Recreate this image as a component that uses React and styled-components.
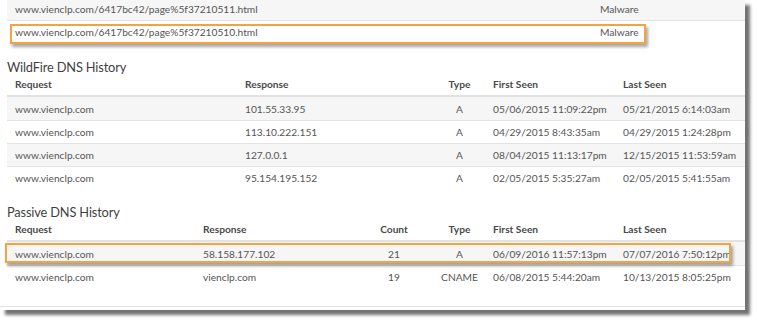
import React from 'react';
import styled, {createGlobalStyle} from 'styled-components';

const GlobalStyle = createGlobalStyle`
    body {
        margin: 0;
        background: #fff;
        font-family: Lato, "Open Sans", sans-serif;
    }
`;

const Page = styled.div`
    width: 757px;
    height: 322px;
    overflow: hidden;
    background: #fff;
`;

const Panel = styled.div`
    position: relative;
    width: 745px;
    height: 310px;
    background: #fff;
    box-shadow: 5px 5px 3px rgba(0, 0, 0, 0.55);
    overflow: hidden;
`;

const Inner = styled.div`
    margin-top: -3px;
    padding-left: 7px;
    height: 310px;
    border-bottom: 1px solid #e4e4e4;
    box-sizing: border-box;
`;

const Heading = styled.h3`
    margin: 0;
    padding: ${p => p.$top}px 0 0 0;
    height: 18px;
    line-height: 18px;
    font-size: 12.8px;
    font-weight: 400;
    color: #3f3f3f;
    letter-spacing: -0.15px;
`;

const Row = styled.div`
    display: grid;
    grid-template-columns: ${p => p.$cols};
    align-items: center;
    height: 23px;
    padding-left: 8px;
    box-sizing: border-box;
    background: ${p => (p.$striped ? '#f6f6f6' : '#fff')};
    border-top: ${p => (p.$first ? 'none' : '1px solid #e3e3e3')};
    font-size: 10.2px;
    color: #555;
    white-space: nowrap;
`;

const HeadRow = styled(Row)`
    height: 21px;
    border-top: none;
    border-bottom: 2px solid #e2e2e2;
    font-weight: 700;
    color: #4a4a4a;
    background: #fff;
    align-items: start;
    padding-top: 2px;
    line-height: 13px;
`;

const Cell = styled.div`
    text-align: ${p => p.$align || 'left'};
`;

const Highlight = styled.div`
    position: absolute;
    left: ${p => p.$x}px;
    top: ${p => p.$y}px;
    width: ${p => p.$w}px;
    height: ${p => p.$h}px;
    border: 2px solid #f6a33f;
    box-sizing: border-box;
    box-shadow: 2px 3px 3px rgba(0, 0, 0, 0.35);
    pointer-events: none;
`;

const urlCols = '585px 1fr';
const wfCols = '230px 181px 67px 130px 1fr';
const pdCols = '188px 159px 64px 67px 130px 1fr';

const urls = [
    ['www.vienclp.com/6417bc42/page%5f37210511.html', 'Malware'],
    ['www.vienclp.com/6417bc42/page%5f37210510.html', 'Malware'],
];

const wildfire = [
    ['www.vienclp.com', '101.55.33.95', 'A', '05/06/2015 11:09:22pm', '05/21/2015 6:14:03am'],
    ['www.vienclp.com', '113.10.222.151', 'A', '04/29/2015 8:43:35am', '04/29/2015 1:24:28pm'],
    ['www.vienclp.com', '127.0.0.1', 'A', '08/04/2015 11:13:17pm', '12/15/2015 11:53:59am'],
    ['www.vienclp.com', '95.154.195.152', 'A', '02/05/2015 5:35:27am', '02/05/2015 5:41:55am'],
];

const passive = [
    ['www.vienclp.com', '58.158.177.102', '21', 'A', '06/09/2016 11:57:13pm', '07/07/2016 7:50:12pm'],
    ['www.vienclp.com', 'vienclp.com', '19', 'CNAME', '06/08/2015 5:44:20am', '10/13/2015 8:05:25pm'],
];

function App() {
    return (
        <Page>
            <GlobalStyle />
            <Panel>
                <Inner>
                    {urls.map((u, i) => (
                        <Row key={u[1] + i} $cols={urlCols} $striped={i % 2 === 0} $first={i === 0}>
                            <Cell>{u[0]}</Cell>
                            <Cell>{u[1]}</Cell>
                        </Row>
                    ))}

                    <Heading $top={15}>WildFire DNS History</Heading>
                    <HeadRow $cols={wfCols}>
                        <Cell>Request</Cell>
                        <Cell>Response</Cell>
                        <Cell $align="center">Type</Cell>
                        <Cell>First Seen</Cell>
                        <Cell>Last Seen</Cell>
                    </HeadRow>
                    {wildfire.map((r, i) => (
                        <Row key={r[1]} $cols={wfCols} $striped={i % 2 === 0} $first={i === 0}>
                            <Cell>{r[0]}</Cell>
                            <Cell>{r[1]}</Cell>
                            <Cell $align="center">{r[2]}</Cell>
                            <Cell>{r[3]}</Cell>
                            <Cell>{r[4]}</Cell>
                        </Row>
                    ))}

                    <Heading $top={14}>Passive DNS History</Heading>
                    <HeadRow $cols={pdCols}>
                        <Cell>Request</Cell>
                        <Cell>Response</Cell>
                        <Cell $align="center">Count</Cell>
                        <Cell $align="center">Type</Cell>
                        <Cell>First Seen</Cell>
                        <Cell>Last Seen</Cell>
                    </HeadRow>
                    {passive.map((r, i) => (
                        <Row key={r[1]} $cols={pdCols} $striped={i % 2 === 0} $first={i === 0}>
                            <Cell>{r[0]}</Cell>
                            <Cell>{r[1]}</Cell>
                            <Cell $align="center">{r[2]}</Cell>
                            <Cell $align="center">{r[3]}</Cell>
                            <Cell>{r[4]}</Cell>
                            <Cell>{r[5]}</Cell>
                        </Row>
                    ))}
                </Inner>
                <Highlight $x={10} $y={24} $w={636} $h={20} />
                <Highlight $x={5} $y={243} $w={726} $h={20} />
            </Panel>
        </Page>
    );
}

export default App;
